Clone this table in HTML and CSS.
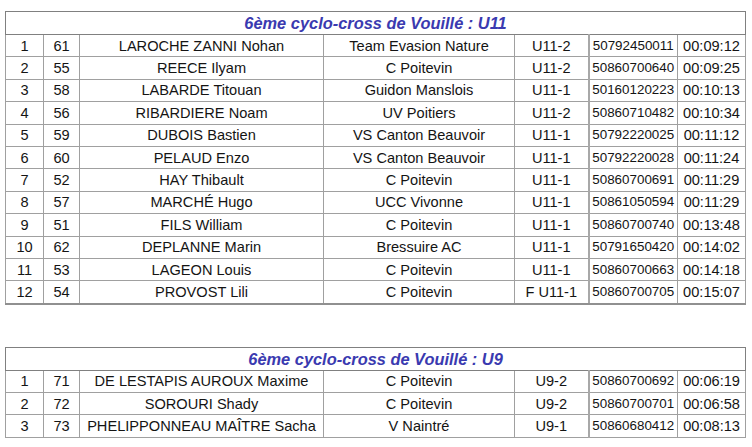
FILE: index.html
```html
<!DOCTYPE html>
<html lang="fr">
<head>
<meta charset="utf-8">
<link rel="stylesheet" href="styles.css">
</head>
<body>
<div class="page">
  <table class="results">
    <colgroup>
      <col class="c-rank"><col class="c-bib"><col class="c-name"><col class="c-team"><col class="c-cat"><col class="c-lic"><col class="c-time">
    </colgroup>
    <tr class="title-row"><td colspan="7">6ème cyclo-cross de Vouillé : U11</td></tr>
    <tr><td>1</td><td>61</td><td>LAROCHE ZANNI Nohan</td><td>Team Evasion Nature</td><td>U11-2</td><td class="lic">50792450011</td><td>00:09:12</td></tr>
    <tr><td>2</td><td>55</td><td>REECE Ilyam</td><td>C Poitevin</td><td>U11-2</td><td class="lic">50860700640</td><td>00:09:25</td></tr>
    <tr><td>3</td><td>58</td><td>LABARDE Titouan</td><td>Guidon Manslois</td><td>U11-1</td><td class="lic">50160120223</td><td>00:10:13</td></tr>
    <tr><td>4</td><td>56</td><td>RIBARDIERE Noam</td><td>UV Poitiers</td><td>U11-2</td><td class="lic">50860710482</td><td>00:10:34</td></tr>
    <tr><td>5</td><td>59</td><td>DUBOIS Bastien</td><td>VS Canton Beauvoir</td><td>U11-1</td><td class="lic">50792220025</td><td>00:11:12</td></tr>
    <tr><td>6</td><td>60</td><td>PELAUD Enzo</td><td>VS Canton Beauvoir</td><td>U11-1</td><td class="lic">50792220028</td><td>00:11:24</td></tr>
    <tr><td>7</td><td>52</td><td>HAY Thibault</td><td>C Poitevin</td><td>U11-1</td><td class="lic">50860700691</td><td>00:11:29</td></tr>
    <tr><td>8</td><td>57</td><td>MARCHÉ Hugo</td><td>UCC Vivonne</td><td>U11-1</td><td class="lic">50861050594</td><td>00:11:29</td></tr>
    <tr><td>9</td><td>51</td><td>FILS William</td><td>C Poitevin</td><td>U11-1</td><td class="lic">50860700740</td><td>00:13:48</td></tr>
    <tr><td>10</td><td>62</td><td>DEPLANNE Marin</td><td>Bressuire AC</td><td>U11-1</td><td class="lic">50791650420</td><td>00:14:02</td></tr>
    <tr><td>11</td><td>53</td><td>LAGEON Louis</td><td>C Poitevin</td><td>U11-1</td><td class="lic">50860700663</td><td>00:14:18</td></tr>
    <tr class="last"><td>12</td><td>54</td><td>PROVOST Lili</td><td>C Poitevin</td><td>F U11-1</td><td class="lic">50860700705</td><td>00:15:07</td></tr>
  </table>

  <table class="results second">
    <colgroup>
      <col class="c-rank"><col class="c-bib"><col class="c-name"><col class="c-team"><col class="c-cat"><col class="c-lic"><col class="c-time">
    </colgroup>
    <tr class="title-row"><td colspan="7">6ème cyclo-cross de Vouillé : U9</td></tr>
    <tr><td>1</td><td>71</td><td>DE LESTAPIS AUROUX Maxime</td><td>C Poitevin</td><td>U9-2</td><td class="lic">50860700692</td><td>00:06:19</td></tr>
    <tr><td>2</td><td>72</td><td>SOROURI Shady</td><td>C Poitevin</td><td>U9-2</td><td class="lic">50860700701</td><td>00:06:58</td></tr>
    <tr><td>3</td><td>73</td><td>PHELIPPONNEAU MAÎTRE Sacha</td><td>V Naintré</td><td>U9-1</td><td class="lic">50860680412</td><td>00:08:13</td></tr>
  </table>
</div>
</body>
</html>
```

FILE: styles.css
```css
html, body {
  margin: 0;
  padding: 0;
  background: #ffffff;
}

.page {
  padding: 11px 0 0 5px;
  font-family: "Liberation Sans", Arial, sans-serif;
  color: #141414;
}

.results {
  border-collapse: collapse;
  table-layout: fixed;
  width: 740px;
  border: 1px solid #808080;
}

.results.second {
  margin-top: 42px;
}

.c-rank { width: 38px; }
.c-bib { width: 36px; }
.c-name { width: 244px; }
.c-team { width: 191px; }
.c-cat { width: 74px; }
.c-lic { width: 89px; }
.c-time { width: 68px; }

.results td {
  border: 1px solid #a0a0a0;
  height: 21.4px;
  padding: 0;
  text-align: center;
  font-size: 14.6px;
  line-height: 16px;
  white-space: nowrap;
  overflow: hidden;
}

.results td.lic {
  font-size: 13.4px;
  border-left: 2px solid #a8a8a8;
}

.results tr.title-row td {
  height: 22px;
  border: 1px solid #808080;
  color: #3a3ab0;
  font-weight: bold;
  font-style: italic;
  font-size: 16.4px;
}

.results tr.last td {
  border-bottom: 2px solid #909090;
}
```
